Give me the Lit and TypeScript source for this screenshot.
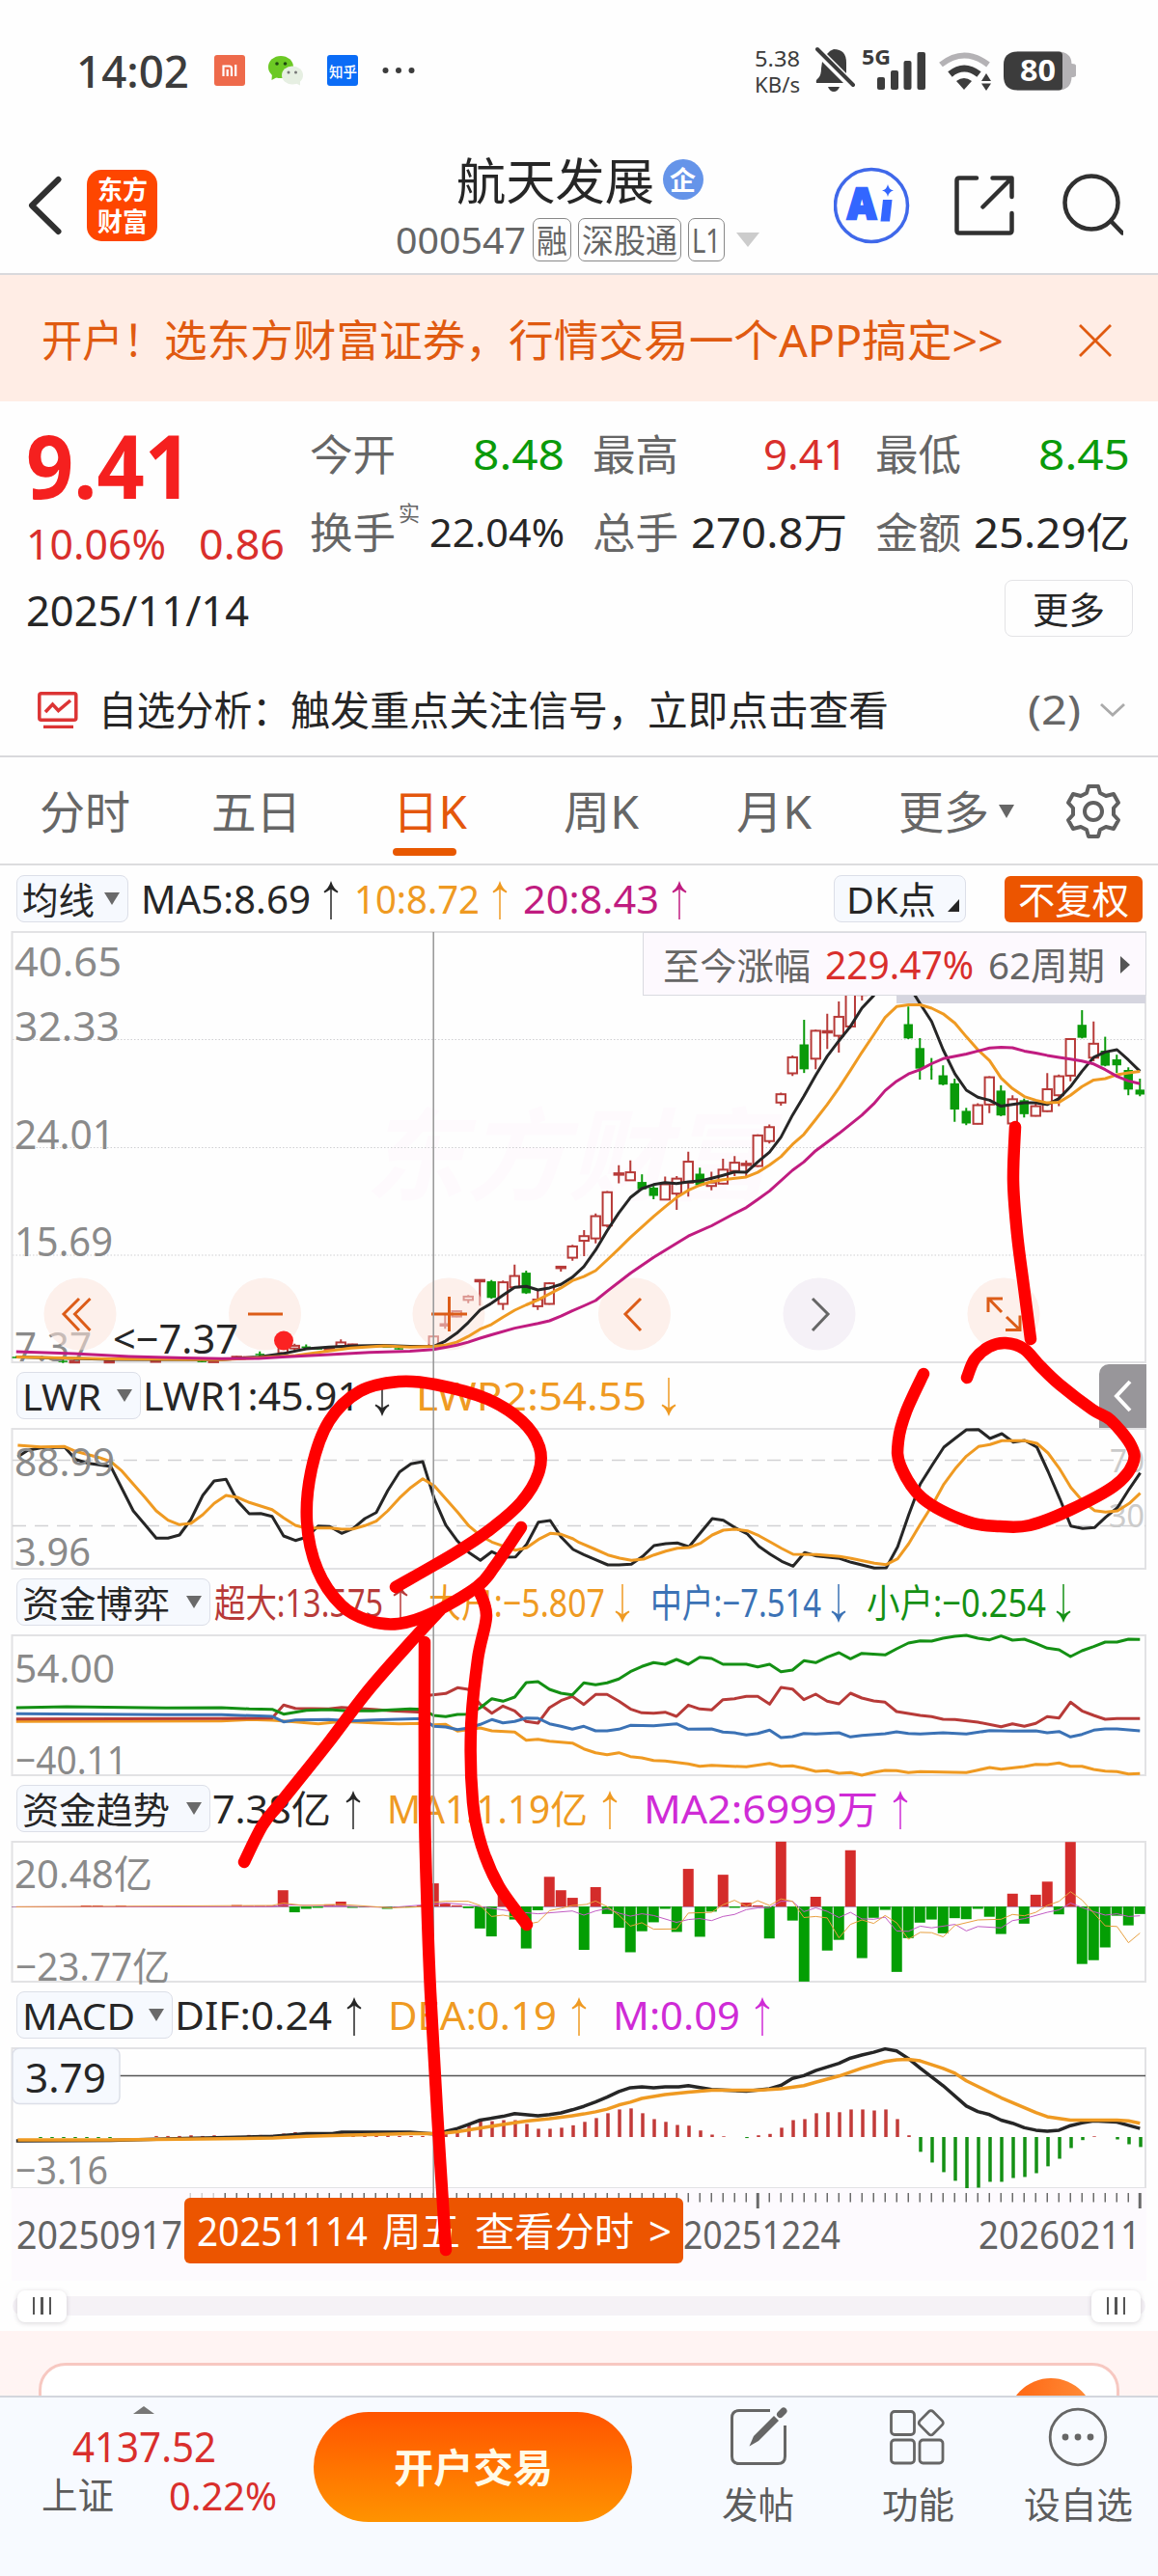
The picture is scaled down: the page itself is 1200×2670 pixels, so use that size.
import { html, svg, css, LitElement } from "lit";
import { customElement, property } from "lit/decorators.js";

const RED = "#b73a38";
const GREEN = "#149014";
const ORANGE = "#ef9a22";
const BLACK = "#262626";
const PURPLE = "#c01c80";
const BLUE = "#3b72b5";
const VIOLET = "#cf2bd6";

// chart grid: one day is STEP units wide, day 0 is the last one
const UNIT = 2.6133;
const STEP = 31.36;
const HALF = 1568;
const dayX = (k: number) => (HALF + 1519 - STEP * k) / UNIT;

// text drawn to an exact width
const fit = (text: string, w: number, size: number, cls = "") => {
  const h = Math.round(size * 1.2);
  return html`<svg class="fit ${cls}" width=${w} height=${h}>
    <text x="0" y=${h / 2 + size * 0.357 + 1} font-size=${size} textLength=${w} lengthAdjust="spacingAndGlyphs">${text}</text>
  </svg>`;
};

const label = (text: string, x: number, y: number, w: number, size = 41, fill = "#8a8a8a") =>
  svg`<text x=${x} y=${y + 0.5} font-size=${size} fill=${fill} textLength=${w} lengthAdjust="spacingAndGlyphs">${text}</text>`;

// left and right halves of a series joined in page coordinates
const series = (left: string, right: string, y0: number, sy: number) => {
  const half = (s: string, dx: number) =>
    s.split(" ").map((p) => {
      const [x, y] = p.split(",").map(Number);
      return `${((x + dx) / UNIT).toFixed(1)},${(y0 + y / sy).toFixed(1)}`;
    });
  return [...half(left, 0), ...half(right, HALF)].join(" ");
};

const line = (points: string, color: string, width = 3.5) =>
  svg`<polyline points=${points} fill="none" stroke=${color} stroke-width=${width} stroke-linejoin="round" />`;

const frame = (y: number, h: number) =>
  svg`<rect x="12.5" y=${y} width="1174.5" height=${h} fill="none" stroke="#e2e2e4" stroke-width="2" />`;

// open smooth curve through points
const smooth = (pts: number[][]) => {
  let d = `M${pts[0][0]} ${pts[0][1]}`;
  for (let i = 0; i < pts.length - 1; i++) {
    const p0 = pts[i - 1] || pts[i];
    const p1 = pts[i];
    const p2 = pts[i + 1];
    const p3 = pts[i + 2] || p2;
    d += ` C${p1[0] + (p2[0] - p0[0]) / 6} ${p1[1] + (p2[1] - p0[1]) / 6} ${p2[0] - (p3[0] - p1[0]) / 6} ${p2[1] - (p3[1] - p1[1]) / 6} ${p2[0]} ${p2[1]}`;
  }
  return d;
};

// [day, up, high, body top, body bottom, low]
const candles: number[][] = [
  [0, 0, 662, 695, 710, 715], [1, 0, 628, 636, 695, 712], [2, 0, 590, 604, 622, 645], [3, 0, 536, 578, 623, 625],
  [4, 1, 490, 557, 599, 610], [5, 0, 456, 500, 539, 541], [6, 1, 540, 543, 653, 670], [7, 1, 650, 655, 712, 745],
  [8, 1, 645, 694, 760, 762], [9, 1, 735, 745, 774, 776], [10, 0, 722, 727, 769, 779], [11, 1, 712, 724, 797, 800],
  [12, 0, 682, 698, 773, 775], [13, 1, 655, 658, 740, 766], [14, 1, 736, 742, 798, 799], [15, 0, 750, 759, 797, 802],
  [16, 0, 662, 676, 755, 792], [17, 0, 622, 652, 680, 682], [18, 0, 600, 632, 632, 665], [19, 0, 540, 570, 632, 665],
  [20, 0, 445, 498, 541, 543], [24, 1, 395, 400, 410, 427], [25, 1, 395, 398, 505, 512], [26, 1, 430, 476, 533, 584],
  [27, 1, 467, 519, 520, 573], [28, 1, 515, 518, 602, 634], [29, 0, 485, 559, 634, 645], [30, 1, 592, 598, 646, 654],
  [31, 1, 704, 709, 734, 743], [32, 1, 800, 808, 850, 857], [33, 1, 830, 833, 925, 928], [34, 1, 908, 918, 922, 955],
  [35, 1, 895, 915, 940, 955], [36, 1, 903, 936, 978, 980], [37, 1, 942, 975, 985, 998], [38, 0, 930, 948, 983, 985],
  [39, 1, 882, 912, 975, 1017], [40, 1, 955, 963, 1008, 1057], [41, 1, 957, 980, 1026, 1028], [42, 0, 985, 990, 1015, 1025],
  [43, 0, 950, 973, 995, 997], [44, 1, 908, 944, 968, 970], [45, 1, 923, 947, 950, 977], [46, 1, 1000, 1004, 1104, 1110],
  [47, 1, 1068, 1076, 1143, 1158], [48, 1, 1118, 1136, 1150, 1196], [49, 1, 1162, 1167, 1201, 1210], [50, 1, 1226, 1228, 1229, 1243],
  [51, 1, 1275, 1278, 1340, 1342], [52, 1, 1300, 1327, 1347, 1358], [53, 0, 1240, 1246, 1308, 1310], [54, 1, 1222, 1256, 1290, 1292],
  [55, 1, 1270, 1275, 1340, 1358], [56, 0, 1268, 1272, 1322, 1324], [57, 1, 1266, 1268, 1269, 1345], [58, 1, 1313, 1318, 1328, 1338],
  [59, 1, 1360, 1362, 1378, 1380], [60, 1, 1370, 1401, 1403, 1415], [61, 1, 1436, 1438, 1468, 1470], [64, 0, 1472, 1473, 1475, 1477],
  [65, 0, 1466, 1468, 1470, 1472], [68, 1, 1460, 1462, 1464, 1468], [69, 1, 1447, 1456, 1468, 1470], [70, 1, 1470, 1474, 1477, 1480],
  [71, 0, 1470, 1473, 1475, 1477], [72, 0, 1462, 1468, 1471, 1478], [73, 1, 1460, 1466, 1474, 1484], [74, 1, 1450, 1473, 1488, 1492],
  [76, 0, 1483, 1490, 1492, 1500], [77, 1, 1498, 1500, 1501, 1503], [78, 1, 1497, 1499, 1500, 1502], [80, 1, 1508, 1511, 1513, 1514],
  [81, 0, 1507, 1511, 1513, 1515], [85, 1, 1508, 1510, 1511, 1515], [89, 1, 1508, 1512, 1513, 1517], [92, 1, 1508, 1512, 1514, 1516],
  [93, 0, 1506, 1511, 1513, 1518], [97, 0, 1497, 1499, 1500, 1503],
];

const mainY = (v: number) => 890 + v / 2.9037;

// signed flow per day, in units off the zero line
const flow: number[] = [
  -22, -55, -27, -119, -156, -167, 187, -23, 72, 34, -50, 37, -80, -30, -7, -37, -34, -78, -38, -47, -92, -190, -10, -33, -150,
  163, -97, -128, 28, -218, -41, 188, -93, 3, 11, -4, 92, -15, -88, 109, -74, -7, -46, -72, -133, -62, -22, 56, -126, 25, 47, 86,
  -11, -122, -38, 35, -87, -64, -5, 3, 8, 67, 3, -3, -2, -7, -2, -3, -4, 14, 6, -4, -7, -17, 47, 2, 2, 2, 4, 0, 0, 0, 0, 0, 0, 0, 0,
  0, 3, 0, 3, 3,
];

const macd: number[] = [
  -29, -21, -7, 0, 2, -9, -32, -63, -85, -105, -116, -119, -130, -130, -147, -149, -127, -102, -74, -43, 5, 52, 80, 77, 80, 80,
  72, 72, 69, 52, 49, 27, 9, 5, -3, 0, 2, 7, 19, 33, 35, 44, 52, 69, 83, 80, 69, 55, 44, 34, 27, 24, 24, 38, 49, 49, 46, 46, 36, 18,
  9, 4, 3, 3, 3, 5, 6, 7, 9, 11, 11, 13, 12, 14, 10, 6, 6, 6, 3, 3, 5, 3, 5, 3, 3, 3, 0, 0, 0, -3, -3, -3, -3, -3, -3, -3,
];

const marks = [
  [[1052, 1168], [1050, 1224], [1054, 1279], [1061, 1334], [1068, 1388]],
  [[1002, 1428], [1010, 1409], [1025, 1396], [1042, 1392], [1061, 1398], [1078, 1416], [1098, 1435], [1132, 1461], [1151, 1472], [1172, 1498], [1174, 1517], [1155, 1540], [1109, 1565], [1067, 1581], [1036, 1582], [1002, 1577], [956, 1553], [933, 1519], [931, 1493], [939, 1463], [957, 1424]],
  [[410, 1645], [471, 1610], [507, 1586], [540, 1557], [558, 1527], [559, 1500], [541, 1473], [505, 1450], [451, 1435], [413, 1432], [373, 1442], [341, 1473], [323, 1522], [318, 1577], [329, 1627], [354, 1664], [383, 1680], [413, 1683], [448, 1672], [494, 1645], [513, 1623], [540, 1583]],
  [[456, 1669], [421, 1707], [380, 1754], [339, 1808], [291, 1868], [272, 1892], [253, 1930]],
  [[440, 1702], [440, 1868], [442, 1957], [446, 2064], [453, 2189], [462, 2332]],
  [[497, 1650], [504, 1675], [495, 1720], [488, 1793], [490, 1868], [499, 1913], [517, 1955], [546, 1995]],
];

const arrow = (dir: string) => html`<svg class="arrow ${dir}" width="16" height="40" viewBox="0 0 16 40">
  <path d="M8 6V40" fill="none" stroke="currentColor" stroke-width="1.5" />
  <path d="M8 0Q10.5 8 15.5 11L14.5 12.5Q11 10.5 8 8.5Q5 10.5 1.5 12.5L.5 11Q5.5 8 8 0Z" fill="currentColor" />
</svg>`;

@customElement("indicator-legend")
export class IndicatorLegend extends LitElement {
  static styles = css`
    :host {
      display: flex;
      align-items: center;
      height: 69px;
      padding-left: 17px;
      box-sizing: border-box;
      font-family: "Noto Sans", "Noto Sans CJK SC", sans-serif;
    }
    svg {
      flex: none;
    }
    .pick {
      display: flex;
      align-items: center;
      justify-content: space-between;
      box-sizing: border-box;
      height: 49px;
      padding: 0 8px 0 5px;
      border: 1.5px solid #dcdfe8;
      border-radius: 8px;
      background: #f6f9fe;
      color: #262626;
    }
    .tri {
      border: 8px solid transparent;
      border-top: 13px solid #6a6a6a;
      border-bottom: 0;
    }
    .near .tri {
      margin-right: 0;
    }
    .items {
      display: flex;
      align-items: center;
      gap: 27px;
      padding-left: 2px;
    }
    .items.near {
      gap: 16px;
      padding-left: 13px;
    }
    .item {
      display: flex;
      align-items: center;
      gap: 15px;
    }
    .near .item {
      gap: 13px;
    }
    .items.tight {
      gap: 21px;
      padding-left: 4px;
    }
    .tight .item {
      gap: 10px;
    }
    .fit {
      overflow: visible;
      fill: currentColor;
    }
    .arrow {
      margin-top: 2px;
    }
    .down {
      transform: rotate(180deg);
    }
  `;

  @property() name = "";
  @property({ type: Number }) nameWidth = 0;
  @property({ type: Number }) box = 0;
  @property() kind = "";
  @property({ type: Array }) items: any[] = [];

  render() {
    return html`
      <div class="pick" style="width:${this.box}px">
        ${fit(this.name, this.nameWidth, 38)}
        <i class="tri"></i>
      </div>
      <div class="items ${this.kind}">
        ${this.items.map(
          ([text, w, color, dir]) => html`<span class="item" style="color:${color}">
            ${fit(text, w, 40)} ${arrow(dir)}
          </span>`
        )}
      </div>
      <slot></slot>
    `;
  }
}

@customElement("app-root")
export class AppRoot extends LitElement {
  static styles = css`
    :host {
      display: block;
      position: relative;
      width: 1200px;
      height: 2670px;
      overflow: hidden;
      background: #fefefe;
      color: #262626;
      font-family: "Noto Sans", "Noto Sans CJK SC", sans-serif;
    }
    svg {
      display: block;
      flex: none;
    }
    .fit {
      overflow: visible;
      fill: currentColor;
    }
    .b {
      font-weight: 700;
    }
    .m {
      font-weight: 500;
    }
    .status {
      display: flex;
      align-items: center;
      height: 146px;
      padding: 0 85px 0 79px;
      color: #3c3c3c;
    }
    .apps {
      display: flex;
      align-items: center;
      gap: 24px;
      margin-left: 26px;
    }
    .mi,
    .zhihu {
      display: flex;
      align-items: center;
      justify-content: center;
      width: 32px;
      height: 32px;
      border-radius: 3px;
      background: #ee6a4b;
      color: #fff;
    }
    .zhihu {
      background: #0b6cf6;
    }
    .right {
      display: flex;
      align-items: center;
      margin-left: auto;
    }
    .speed {
      display: flex;
      flex-direction: column;
      margin-right: 16px;
    }
    .nav {
      display: flex;
      align-items: center;
      box-sizing: border-box;
      height: 139px;
      padding: 0 34px 4px 28px;
      border-bottom: 2px solid #d9d9dc;
    }
    .logo {
      display: flex;
      flex-direction: column;
      align-items: center;
      justify-content: center;
      gap: 1px;
      width: 73px;
      height: 74px;
      margin-left: 25px;
      border-radius: 15px;
      background: #fe4600;
      color: #fff;
    }
    .title {
      display: flex;
      flex-direction: column;
      align-items: center;
      width: 376px;
      margin: 3px 78px 0 247px;
    }
    .name {
      display: flex;
      align-items: center;
      gap: 9px;
      padding: 1px 0 7px 5px;
    }
    .corp {
      display: flex;
      align-items: center;
      justify-content: center;
      width: 42px;
      height: 42px;
      margin-top: -3px;
      border-radius: 50%;
      background: #6594e9;
      color: #fff;
    }
    .code {
      display: flex;
      align-items: center;
      gap: 7px;
      color: #666;
    }
    .tag {
      display: flex;
      align-items: center;
      justify-content: center;
      box-sizing: border-box;
      height: 45px;
      padding: 0 3px;
      border: 1.5px solid #888;
      border-radius: 7px;
    }
    .caret {
      margin-left: 5px;
      border: 12px solid transparent;
      border-top: 15px solid #ccc;
      border-bottom: 0;
    }
    .banner {
      display: flex;
      align-items: center;
      box-sizing: border-box;
      height: 131px;
      padding: 4px 48px 0 43px;
      background: #ffede5;
      color: #e05a10;
    }
    .close {
      margin-left: auto;
    }
    .quote {
      display: flex;
      height: 272px;
    }
    .now {
      display: flex;
      flex-direction: column;
      width: 295px;
      padding: 25px 0 0 27px;
      color: #d92f2c;
    }
    .price {
      display: flex;
      align-items: center;
      height: 84px;
      color: #f5201f;
    }
    .delta {
      display: flex;
      align-items: center;
      gap: 34px;
      height: 78px;
    }
    .date {
      display: flex;
      align-items: center;
      height: 58px;
      color: #262626;
    }
    .stats {
      display: flex;
      flex-direction: column;
      width: 852px;
      padding-top: 14px;
    }
    .grid {
      display: grid;
      grid-template-columns: 264px 264px 264px;
      grid-template-rows: 82px 80px;
      gap: 0 29px;
      margin-left: -1px;
    }
    .stat {
      display: flex;
      align-items: center;
      color: #666;
    }
    .stat > .val {
      margin-left: auto;
    }
    .real {
      margin: 0 0 42px 3px;
    }
    .up {
      color: #d92f2c;
    }
    .fall {
      color: #0a9a0a;
    }
    .ink {
      color: #262626;
    }
    .more {
      display: flex;
      align-items: center;
      justify-content: center;
      align-self: flex-end;
      box-sizing: border-box;
      width: 133px;
      height: 59px;
      margin-top: 9px;
      border: 1.5px solid #e3e3e6;
      border-radius: 8px;
      color: #262626;
    }
    .analysis {
      display: flex;
      align-items: center;
      box-sizing: border-box;
      height: 97px;
      padding: 0 33px 0 39px;
      border-bottom: 2px solid #d9d9dc;
    }
    .analysis .words {
      display: flex;
      margin-left: 21px;
    }
    .count {
      display: flex;
      align-items: center;
      gap: 19px;
      margin-left: auto;
      color: #666;
    }
    .tabs {
      display: flex;
      align-items: center;
      box-sizing: border-box;
      height: 112px;
      padding: 2px 37px 0 41px;
      border-bottom: 2px solid #dcdcde;
      color: #666;
    }
    .tab {
      display: flex;
      flex-direction: column;
      align-items: flex-start;
    }
    .tab.on {
      padding-top: 18px;
      color: #e4570c;
    }
    .bar {
      width: 66px;
      height: 8px;
      margin-top: 10px;
      border-radius: 4px;
      background: #e85800;
    }
    .small {
      margin-left: 10px;
      border: 8px solid transparent;
      border-top: 14px solid #666;
      border-bottom: 0;
    }
    .tools {
      display: flex;
      align-items: center;
      gap: 40px;
      margin: 0 16px 0 auto;
    }
    .dk {
      display: flex;
      align-items: center;
      box-sizing: border-box;
      width: 137px;
      height: 49px;
      padding-left: 12px;
      border: 1.5px solid #dcdfe8;
      border-radius: 8px;
      background: #f6f9fe;
    }
    .corner {
      margin: 14px 0 0 12px;
      border-left: 12px solid transparent;
      border-bottom: 13px solid #262626;
    }
    .adjust {
      display: flex;
      align-items: center;
      justify-content: center;
      width: 143px;
      height: 48px;
      border-radius: 6px;
      background: #ec5500;
      color: #fff;
    }
    .chart {
      position: relative;
    }
    .pane {
      overflow: visible;
    }
    .since {
      position: absolute;
      top: 0;
      right: 12px;
      display: flex;
      align-items: center;
      gap: 15px;
      box-sizing: border-box;
      width: 522px;
      height: 66px;
      padding: 2px 0 0 20px;
      border: 1.5px solid #d9dae0;
      background: #fdf9fe;
      color: #666;
    }
    .play {
      border: 9px solid transparent;
      border-left: 10px solid #555;
      border-right: 0;
      margin-left: 1px;
    }
    .row {
      position: relative;
    }
    .side {
      position: absolute;
      top: 2px;
      right: 12px;
      display: flex;
      align-items: center;
      justify-content: center;
      width: 49px;
      height: 66px;
      border-radius: 10px 0 0 0;
      background: #98969a;
    }
    .axis {
      position: relative;
      height: 96px;
      margin: 0 12px;
      background: #fdfafe;
    }
    .axis > svg {
      margin-left: -12px;
    }
    .pill {
      position: absolute;
      top: 10px;
      left: 179px;
      display: flex;
      align-items: center;
      gap: 15px;
      box-sizing: border-box;
      width: 517px;
      height: 68px;
      padding-left: 13px;
      border-radius: 6px;
      background: #ec5500;
      color: #fff;
    }
    .slider {
      display: flex;
      align-items: center;
      height: 52px;
      padding: 0 13px;
    }
    .track {
      display: flex;
      align-items: center;
      justify-content: space-between;
      width: 1164px;
      height: 20px;
      padding: 0 5px;
      border-radius: 10px;
      background: #f5f2f6;
    }
    .knob {
      display: flex;
      align-items: center;
      justify-content: center;
      gap: 6px;
      width: 51px;
      height: 33px;
      border-radius: 8px;
      background: #fff;
      box-shadow: 0 1px 5px rgba(60, 50, 70, 0.2);
    }
    .knob i {
      width: 2.5px;
      height: 18px;
      background: #555;
    }
    .promo {
      height: 67px;
      box-sizing: border-box;
      padding: 33px 40px 0;
      overflow: hidden;
      background: #fff4f3;
    }
    .card {
      display: flex;
      justify-content: flex-end;
      box-sizing: border-box;
      height: 90px;
      padding: 13px 23px 0 0;
      border: 3px solid #f7c8c1;
      border-radius: 28px;
      background: #fff;
    }
    .ball {
      width: 90px;
      height: 90px;
      flex: none;
      border-radius: 50%;
      background: linear-gradient(100deg, #ff6410, #ff9440);
    }
    .foot {
      display: flex;
      box-sizing: border-box;
      height: 187px;
      border-top: 2px solid #d3d6dd;
      background: #f7faff;
      color: #5c5c5c;
    }
    .index {
      display: flex;
      flex-direction: column;
      align-items: center;
      width: 325px;
      padding-top: 9px;
    }
    .index .peak {
      margin-right: 27px;
      border: 11px solid transparent;
      border-bottom: 8px solid #777;
      border-top: 0;
    }
    .points {
      margin: 8px 27px 0 0;
    }
    .sh {
      display: flex;
      gap: 57px;
      margin: 1px 0 0 5px;
    }
    .trade {
      display: flex;
      align-items: center;
      justify-content: center;
      width: 330px;
      height: 114px;
      margin-top: 15px;
      padding-top: 1px;
      box-sizing: border-box;
      border-radius: 57px;
      background: linear-gradient(#ff5400, #ff9300);
      color: #fffbe8;
    }
    .acts {
      display: flex;
      margin: 8px 0 0 47px;
    }
    .act {
      display: flex;
      flex-direction: column;
      align-items: center;
      gap: 14px;
      width: 166px;
    }
    .ink-layer {
      position: absolute;
      left: 0;
      top: 0;
      pointer-events: none;
    }
    text {
      font-family: "Noto Sans", "Noto Sans CJK SC", sans-serif;
    }
  `;

  statusBar() {
    return html`<div class="status">
      ${fit("14:02", 117, 46, "m")}
      <div class="apps">
        <span class="mi">
          <svg width="16" height="12" viewBox="0 0 16 12">
            <path d="M1.5 12V1.5H7.5Q10 1.5 10 4V12M5.7 5V12M14.2 0V12" fill="none" stroke="#fff" stroke-width="2.2" />
          </svg>
        </span>
        <svg width="37" height="32" viewBox="0 0 37 32">
          <ellipse cx="13" cy="12.5" rx="13" ry="11.5" fill="#6cc924" />
          <path d="M4 19L3.5 26L11 22Z" fill="#6cc924" />
          <circle cx="9" cy="9" r="1.8" fill="#1f4a10" />
          <circle cx="17.5" cy="9" r="1.8" fill="#1f4a10" />
          <ellipse cx="25" cy="21" rx="11" ry="9.5" fill="#e6efe2" />
          <path d="M28 29L33 31.5L33 26Z" fill="#e6efe2" />
          <circle cx="21" cy="18" r="1.5" fill="#777" />
          <circle cx="28.5" cy="18" r="1.5" fill="#777" />
        </svg>
        <span class="zhihu">${fit("知乎", 29, 14.5, "m")}</span>
        <svg width="36" height="8" viewBox="0 0 36 8" fill="#3c3c3c">
          <circle cx="4.5" cy="4" r="3" />
          <circle cx="18" cy="4" r="3" />
          <circle cx="31.5" cy="4" r="3" />
        </svg>
      </div>
      <div class="right">
        <div class="speed">${fit("5.38", 47, 22.5)} ${fit("KB/s", 47, 22.5)}</div>
        <svg width="270" height="72" viewBox="845 36 270 72" fill="#3c3c3c">
          <path d="M864 50Q877 50 877 64V75L857 55Q860 51 864 50Z" />
          <path d="M852 63L874 85H846Q845 82 848 80Q851 77 851 70Z" />
          <path d="M858 89H870Q868 94 864 94Q860 94 858 89Z" />
          <path d="M847 50L884 87" stroke="#3c3c3c" stroke-width="4" stroke-linecap="round" />
          <text x="893" y="65.5" font-size="22" font-weight="700" textLength="30" lengthAdjust="spacingAndGlyphs">5G</text>
          <rect x="909" y="79" width="8" height="13" rx="2" />
          <rect x="923" y="72" width="8" height="20" rx="2" />
          <rect x="936.5" y="62" width="8" height="30" rx="2" />
          <rect x="950.5" y="53" width="8.5" height="39" rx="2" />
          <path d="M975 66Q999 47 1024 66" fill="none" stroke="#b4b2b5" stroke-width="6" />
          <path d="M984.5 76Q999 64 1014.5 76" fill="none" stroke="#3c3c3c" stroke-width="7" />
          <path d="M991 83Q999 77 1007 83L999 92Z" />
          <path d="M1017 83L1022 75L1027 83Z M1017 85.5H1027L1022 93Z" />
          <path d="M1054 52.5H1097Q1110 53 1110.5 65Q1115 65 1115 67V77Q1115 79 1110.5 79Q1110 92 1097 92.5H1054Z" fill="#b4b2b5" />
          <path d="M1054 52.5H1097Q1101 52.5 1101 56V89Q1101 92.5 1097 92.5H1054Q1040 92 1040 78V66Q1040 53 1054 52.5Z" />
          <text x="1057" y="83" font-size="30" font-weight="700" fill="#fff" textLength="37" lengthAdjust="spacingAndGlyphs">80</text>
        </svg>
      </div>
    </div>`;
  }

  nav() {
    return html`<div class="nav">
      <svg width="37" height="62" viewBox="0 0 37 62">
        <path d="M32.5 4L5 31L32.5 58" fill="none" stroke="#303030" stroke-width="6" stroke-linecap="round" stroke-linejoin="round" />
      </svg>
      <div class="logo">${fit("东方", 52, 27, "b")}${fit("财富", 52, 27, "b")}</div>
      <div class="title">
        <div class="name">
          ${fit("航天发展", 205, 51)}
          <span class="corp">${fit("企", 27, 27, "b")}</span>
        </div>
        <div class="code">
          ${fit("000547", 135, 39)}
          <span class="tag">${fit("融", 32, 33)}</span>
          <span class="tag">${fit("深股通", 99, 34)}</span>
          <span class="tag">${fit("L1", 30, 34)}</span>
          <i class="caret"></i>
        </div>
      </div>
      <svg width="300" height="80" viewBox="866 173 300 80" fill="none">
        <circle cx="905" cy="213" r="37.5" stroke="#3f68ea" stroke-width="3.5" />
        <text x="880" y="227" font-size="44" font-weight="900" fill="#3366ff" stroke="#3366ff" stroke-width="2.5" textLength="30" lengthAdjust="spacingAndGlyphs">A</text>
        <path d="M917 207H926.5L924 229.5H914.5Z" fill="#3366ff" />
        <path d="M922 191Q923 196.5 928 197.5Q923 198.5 922 204Q921 198.5 916 197.5Q921 196.5 922 191Z" fill="#3366ff" />
        <g stroke="#303030" stroke-width="4.5" stroke-linecap="round" stroke-linejoin="round">
          <path d="M1014 184.5H996Q993.5 184.5 993.5 187V239Q993.5 241.5 996 241.5H1048Q1050.5 241.5 1050.5 239V221M1030.5 184.5H1050.5V204M1049 186L1020.5 214.5" />
          <circle cx="1133" cy="210" r="27.5" />
          <path d="M1154 230L1165 241.5" />
        </g>
      </svg>
    </div>`;
  }

  stat(name: string, value: string, w: number, cls: string, size = 43) {
    return html`<div class="stat">
      ${fit(name, 89, 44.5)} ${name === "换手" ? html`<span class="real">${fit("实", 22, 22)}</span>` : ""}
      <span class="val ${cls}">${fit(value, w, size)}</span>
    </div>`;
  }

  quote() {
    return html`<div class="quote">
        <div class="now">
          <div class="price">${fit("9.41", 172, 92, "b")}</div>
          <div class="delta">${fit("10.06%", 145, 43)} ${fit("0.86", 89, 43)}</div>
          <div class="date">${fit("2025/11/14", 231, 44)}</div>
        </div>
        <div class="stats">
          <div class="grid">
            ${this.stat("今开", "8.48", 95, "fall")} ${this.stat("最高", "9.41", 87, "up")}
            ${this.stat("最低", "8.45", 95, "fall")} ${this.stat("换手", "22.04%", 140, "ink", 40)}
            ${this.stat("总手", "270.8万", 162, "ink")} ${this.stat("金额", "25.29亿", 162, "ink")}
          </div>
          <div class="more">${fit("更多", 75, 38)}</div>
        </div>
      </div>
      <div class="analysis">
        <svg width="42" height="38" viewBox="0 0 42 38" fill="none" stroke="#dc3434" stroke-width="3.5">
          <rect x="1.8" y="1.8" width="38" height="27.5" rx="2" />
          <path d="M8 21L15.5 13L21.5 19.5L34 9M6 36.5H37" />
        </svg>
        <div class="words">
          ${fit("自选分析：", 199, 41.5)} ${fit("触发重点关注信号，", 370, 41.5)} ${fit("立即点击查看", 250, 41.5)}
        </div>
        <div class="count">
          ${fit("(2)", 55, 41)}
          <svg width="28" height="15" viewBox="0 0 28 15">
            <path d="M2 2L14 13L26 2" fill="none" stroke="#aaa" stroke-width="2.8" />
          </svg>
        </div>
      </div>`;
  }

  tabs() {
    return html`<div class="tabs">
      <span class="tab">${fit("分时", 94, 47)}</span>
      <span class="tab" style="margin-left:84px">${fit("五日", 93, 46.5)}</span>
      <span class="tab on" style="margin-left:95px">${fit("日K", 77, 46.5)}<i class="bar"></i></span>
      <span class="tab" style="margin-left:100px">${fit("周K", 78, 46.5)}</span>
      <span class="tab" style="margin-left:101px">${fit("月K", 78, 46.5)}</span>
      <span class="tab" style="margin-left:90px">${fit("更多", 94, 46.5)}</span>
      <i class="small"></i>
      <svg width="60" height="60" viewBox="-30 -30 60 60" style="margin-left:auto" fill="none" stroke="#606060" stroke-width="4" stroke-linejoin="round">
        <path d="M-5 -26H5L7 -19L13 -16L21 -18L26 -9L21 -3.5V3.5L26 9L21 18L13 16L7 19L5 26H-5L-7 19L-13 16L-21 18L-26 9L-21 3.5V-3.5L-26 -9L-21 -18L-13 -16L-7 -19Z" />
        <circle r="9" />
      </svg>
    </div>`;
  }

  mainChart() {
    const ma = (l: string, r: string) => series(l, r, 890, 2.9037);
    return html`<div class="chart">
      <svg class="pane" width="1200" height="446" viewBox="0 966 1200 446">
        <text x="378" y="1236" font-size="104" font-weight="700" font-style="italic" fill="#fefafd" textLength="420">东方财富</text>
        ${[1077.5, 1189.5, 1301].map(
          (y) => svg`<path d="M13 ${y}H1187" stroke="#cfcfd2" stroke-width="1.2" stroke-dasharray="1.5 2" />`
        )}
        ${frame(966, 446)}
        <rect x="929" y="1031" width="258" height="9" fill="#d5d5df" />
        ${candles.map(([k, up, hi, t, b, lo]) => {
          const x = dayX(k);
          const y = mainY(t);
          const h = Math.max(mainY(b) - y, 1.5);
          return up
            ? svg`<path d="M${x} ${mainY(hi)}V${y}M${x} ${y + h}V${mainY(lo)}" stroke=${RED} stroke-width="2" />
              <rect x=${x - 4.7} y=${y} width="9.4" height=${h} fill="#fefefe" stroke=${RED} stroke-width="2" />`
            : svg`<path d="M${x} ${mainY(hi)}V${mainY(lo)}" stroke="#0a9a0a" stroke-width="2" />
              <rect x=${x - (k === 18 ? 1 : 4.7)} y=${y} width=${k === 18 ? 2 : 9.4} height=${h} fill="#0a9a0a" />`;
        })}
        ${label("40.65", 15, 1011, 111, 42)} ${label("32.33", 15, 1078, 109, 42)} ${label("24.01", 15, 1190, 104, 42)}
        ${label("15.69", 15, 1301, 102, 42)} ${label("7.37", 15, 1410, 80, 42)}
        ${[
          [83, "#fbe3da"], [274.5, "#fbe3da"], [465, "#fbe3da"], [657.5, "#fbe3da"], [849, "#ece6f0"], [1040, "#fbe3da"],
        ].map(([x, c]) => svg`<circle cx=${x} cy="1362" r="37.5" fill=${c} opacity=".55" />`)}
        <g fill="none" stroke="#dc5c18" stroke-width="3">
          <path d="M82 1346L66 1362L82 1379M93.5 1346L77.5 1362L93.5 1379M257 1362H293M447 1362H484M465.5 1344V1380" />
          <path d="M664 1346L648 1362L664 1379" />
          <path d="M1024 1360V1346H1039M1024.5 1346L1038 1360M1057 1363.5V1378.5H1042M1057 1378.5L1043 1365" />
        </g>
        <path d="M842 1346L858 1362L842 1379" fill="none" stroke="#666" stroke-width="3" />
        ${line(ma(
          "44,1500 300,1507 600,1508 700,1500 765,1490 830,1475 890,1470 960,1466 1040,1465 1110,1468 1174,1468 1206,1452 1237,1428 1268,1396 1300,1358 1331,1338 1362,1314 1394,1290 1425,1287 1457,1298 1488,1292 1519,1281 1550,1260",
          "13,1228 45,1178 76,1120 108,1066 139,1020 170,993 202,981 233,975 264,978 296,973 327,970 359,962 390,953 421,943 453,944 484,913 516,883 547,838 578,772 609,715 641,652 672,595 704,548 735,505 766,450 798,412 829,370 860,360 892,380 924,437 955,490 986,575 1018,648 1049,697 1080,718 1112,727 1143,745 1174,740 1206,735 1237,735 1268,740 1300,722 1331,686 1362,640 1394,598 1425,582 1457,575 1488,606 1519,640"
        ), BLACK, 3)}
        ${line(ma(
          "44,1500 300,1506 600,1508 700,1502 800,1495 900,1480 950,1473 1040,1466 1110,1470 1174,1468 1206,1464 1237,1455 1268,1438 1300,1416 1331,1402 1362,1380 1394,1359 1425,1343 1457,1328 1488,1310 1519,1292 1550,1270",
          "13,1258 45,1240 76,1208 108,1174 139,1140 202,1077 233,1048 264,1020 296,998 327,983 359,972 390,966 453,958 484,944 516,922 547,897 578,860 609,830 641,785 672,740 704,690 735,637 766,583 798,530 829,478 860,445 892,440 924,440 955,450 986,467 1018,495 1049,536 1080,575 1112,608 1143,660 1174,692 1206,716 1237,727 1268,735 1300,733 1331,712 1362,686 1394,666 1425,662 1457,650 1488,645 1519,640"
        ), ORANGE, 3)}
        ${line(ma(
          "44,1484 200,1490 350,1498 500,1503 600,1505 700,1504 765,1500 880,1493 1000,1486 1110,1482 1174,1477 1206,1471 1237,1464 1268,1455 1300,1443 1331,1433 1394,1413 1457,1399 1488,1391 1519,1377 1550,1361",
          "13,1346 45,1330 76,1302 139,1248 202,1200 264,1158 296,1136 359,1105 421,1068 453,1050 484,1026 516,1000 578,938 609,913 641,879 704,827 766,772 798,738 829,698 860,670 892,648 924,635 955,617 986,602 1049,588 1080,579 1112,570 1143,568 1174,569 1206,579 1237,585 1268,592 1300,598 1331,603 1362,609 1394,618 1425,635 1457,655 1488,669 1519,677"
        ), PURPLE, 3)}
        <circle cx="294" cy="1389.5" r="10" fill="#fb2222" />
        ${label("<−7.37", 117, 1402, 130, 42, BLACK)}
      </svg>
      <div class="since">
        ${fit("至今涨幅", 153, 38)}
        <span class="up">${fit("229.47%", 154, 40)}</span>
        ${fit("62周期", 121, 39)}
        <i class="play"></i>
      </div>
    </div>`;
  }

  lwrChart() {
    return html`<svg class="pane" width="1200" height="145" viewBox="0 1481 1200 145">
      ${frame(1481, 145)}
      <path d="M13 1513.5H1187M13 1581.5H1187" stroke="#d2d2d4" stroke-width="1.5" stroke-dasharray="14 9" />
      ${label("70", 1150, 1525, 36, 33, "#cbcbcb")} ${label("30", 1149, 1582, 37, 33, "#cbcbcb")}
      ${line(series(
        "48,300 75,280 110,272 175,270 205,308 240,320 268,325 300,330 330,398 361,468 392,510 423,553 455,553 486,543 517,495 549,420 580,375 612,370 643,437 675,477 706,476 737,485 768,546 800,560 830,550 862,515 893,517 925,538 956,523 988,492 1019,473 1050,405 1082,347 1113,322 1145,315 1176,430 1207,512 1239,562 1270,598 1301,622 1332,595 1364,612 1396,611 1426,572 1458,503 1490,498 1520,550 1552,588",
        "13,604 45,620 78,636 108,636 142,634 172,610 203,576 235,570 266,568 298,580 330,535 361,492 391,497 422,520 456,540 487,578 518,603 549,625 580,640 611,598 643,608 706,616 737,628 800,646 832,645 863,580 893,480 924,385 957,325 988,270 1019,242 1049,216 1082,215 1113,243 1145,228 1176,254 1207,249 1240,270 1270,345 1302,430 1332,515 1364,523 1396,520 1426,488 1458,458 1490,400 1520,350",
        1410, 3
      ), BLACK, 3)}
      ${line(series(
        "48,264 110,269 175,268 205,283 268,302 300,315 330,344 361,385 392,425 423,468 455,497 486,511 517,507 549,480 580,445 612,420 643,426 675,442 737,464 768,490 800,513 830,522 862,521 893,521 925,525 956,524 988,514 1019,500 1050,468 1082,428 1113,395 1145,368 1176,390 1239,472 1270,515 1301,545 1332,565 1364,578 1396,590 1426,583 1458,557 1490,538 1520,541 1552,555",
        "0,566 45,588 78,605 110,615 142,622 175,618 203,605 235,593 266,584 298,582 330,568 361,543 391,528 422,525 456,530 487,545 518,565 549,585 580,603 643,604 706,610 737,616 800,631 832,635 863,617 893,570 924,510 957,450 988,385 1019,337 1049,298 1082,268 1113,262 1145,250 1207,250 1240,258 1270,288 1302,338 1332,395 1364,438 1396,467 1426,472 1458,468 1490,445 1520,413",
        1410, 3
      ), ORANGE, 3)}
      ${label("88.99", 15, 1529, 104, 40)} ${label("3.96", 15, 1622, 79, 40)}
    </svg>`;
  }

  fundChart() {
    return html`<svg class="pane" width="1200" height="145" viewBox="0 1695 1200 145">
      ${frame(1695, 145)} ${label("54.00", 15, 1743, 104, 40)} ${label("−40.11", 16, 1838, 116, 40)}
      ${line(series(
        "44,1123 600,1121 675,1117 737,1119 800,1124 862,1130 925,1123 1010,1127 1080,1130 1145,1129 1174,1133 1207,1132 1239,1153 1301,1143 1332,1152 1394,1156 1425,1181 1457,1178 1488,1184 1550,1190",
        "13,1208 45,1220 76,1226 108,1220 139,1232 170,1236 202,1244 233,1246 296,1255 327,1262 359,1259 453,1264 516,1253 547,1262 578,1261 609,1268 641,1278 672,1276 704,1284 735,1282 766,1290 798,1281 829,1275 860,1276 892,1282 924,1279 1049,1282 1080,1274 1112,1266 1143,1271 1206,1263 1237,1256 1268,1257 1300,1252 1331,1262 1362,1262 1394,1272 1425,1277 1457,1279 1488,1286 1519,1285",
        1410, 3
      ), ORANGE, 3)}
      ${line(series(
        "44,1115 600,1114 737,1112 768,1072 800,1082 890,1084 925,1079 1010,1085 1060,1090 1145,1094 1160,1042 1207,1036 1239,1018 1268,1023 1301,1070 1332,1097 1362,1075 1394,1090 1425,1123 1457,1128 1488,1080 1519,1058 1550,1045",
        "13,1070 45,1039 76,1039 108,1060 139,1084 170,1096 202,1097 233,1094 264,1107 296,1072 327,1084 359,1087 390,1055 421,1052 453,1045 484,1045 516,1069 547,1017 578,1022 609,1055 641,1038 672,1060 704,1068 735,1035 766,1050 798,1059 829,1063 860,1092 924,1104 955,1108 986,1116 1018,1117 1080,1125 1143,1139 1174,1130 1206,1138 1237,1129 1268,1108 1300,1112 1331,1063 1362,1090 1394,1104 1425,1116 1457,1114 1519,1114",
        1410, 3
      ), RED, 3)}
      ${line(series(
        "44,1099 450,1102 600,1102 737,1107 768,1124 800,1118 890,1117 950,1121 1010,1118 1145,1114 1174,1138 1207,1140 1239,1148 1270,1143 1301,1132 1332,1117 1362,1127 1394,1123 1425,1112 1457,1113 1488,1130 1519,1138 1550,1147",
        "13,1138 45,1152 76,1152 108,1147 139,1135 202,1136 264,1130 296,1147 359,1146 390,1156 421,1158 453,1165 484,1160 516,1150 547,1173 578,1170 609,1160 641,1162 704,1158 735,1171 766,1166 829,1161 860,1155 892,1160 924,1162 986,1158 1049,1162 1112,1151 1174,1153 1237,1152 1268,1158 1300,1154 1331,1171 1362,1163 1394,1150 1425,1146 1457,1146 1519,1152",
        1410, 3
      ), BLUE, 3)}
      ${line(series(
        "44,1080 180,1077 450,1081 600,1080 675,1084 737,1085 768,1100 830,1088 890,1086 940,1090 1010,1090 1110,1084 1145,1085 1174,1104 1207,1108 1239,1101 1270,1100 1301,1080 1332,1052 1362,1060 1394,1047 1425,1002 1457,999 1488,1023 1519,1035 1550,1040",
        "13,1003 45,1009 76,1003 108,991 139,968 170,952 202,940 233,945 264,930 296,945 327,923 359,927 390,945 453,945 484,953 516,945 547,968 578,963 609,934 641,940 672,923 704,909 735,928 766,911 829,916 860,897 892,879 924,872 955,873 986,864 1018,858 1049,855 1080,864 1112,869 1143,857 1174,870 1206,867 1237,880 1268,895 1300,900 1331,921 1362,903 1394,890 1425,876 1457,876 1488,867 1519,868",
        1410, 3
      ), GREEN, 3)}
    </svg>`;
  }

  flowChart() {
    const zero = 1976;
    return html`<svg class="pane" width="1200" height="145" viewBox="0 1909 1200 145">
      ${frame(1909, 145)} ${label("20.48亿", 15, 1956, 143, 40)} ${label("−23.77亿", 16, 2052, 160, 40)}
      <path d="M12 ${zero + 0.5}H1187" stroke="#b48ab0" stroke-width="1" />
      ${flow.map((v, k) => {
        const h = Math.abs(v) / 2.8;
        return svg`<rect x=${dayX(k) - 5.5} y=${v > 0 ? zero - h : zero} width="11" height=${h} fill=${v > 0 ? "#d42c2b" : "#049e04"} />`;
      })}
      ${line(series(
        "44,354 737,353 768,348 900,351 1060,356 1207,343 1268,348 1332,358 1394,368 1457,374 1550,366",
        "13,378 45,366 76,359 108,372 139,381 170,374 202,379 264,399 296,391 327,388 359,394 390,382 421,376 453,362 484,357 516,356 547,338 578,338 609,368 641,357 672,367 704,385 735,370 766,389 798,390 829,384 860,424 892,425 924,410 955,415 1018,405 1049,424 1080,411 1143,415 1174,394 1206,388 1268,370 1300,363 1331,343 1362,356 1394,368 1425,378 1457,374 1488,382 1519,380",
        1850, 2.8
      ), "#c25cc4", 1)}
      ${line(series(
        "44,354 737,350 768,343 820,350 925,347 1060,357 1150,353 1174,341 1207,338 1268,338 1300,350 1331,382 1362,378 1394,384 1425,405 1457,398 1488,365 1519,358 1550,350",
        "0,349 20,347 45,337 76,353 108,378 139,410 170,400 202,419 264,418 296,372 359,370 390,348 421,335 453,352 484,336 516,350 547,331 578,338 609,385 641,382 672,386 704,444 735,405 766,392 798,402 829,379 860,400 892,448 924,428 955,429 986,441 1018,408 1080,392 1143,390 1174,376 1206,380 1237,370 1268,350 1300,338 1331,310 1362,334 1394,372 1425,409 1457,411 1488,458 1519,430",
        1850, 2.8
      ), "#e8a040", 1)}
    </svg>`;
  }

  macdChart() {
    const zero = 2215;
    return html`<svg class="pane" width="1200" height="145" viewBox="0 2123 1200 145">
      ${frame(2123, 145)}
      <path d="M124 2151.5H1187" stroke="#555" stroke-width="1.3" />
      ${macd.map((v, k) => {
        const h = Math.abs(v) / 2.8;
        return svg`<rect x=${dayX(k) - 1} y=${v > 0 ? zero - h : zero} width="3.5" height=${h} fill=${v > 0 ? "#c23a38" : "#149014"} />`;
      })}
      ${line(series(
        "44,1033 300,1032 500,1026 740,1020 830,1012 900,1012 925,1008 1110,1008 1174,1013 1207,1006 1239,997 1268,986 1300,973 1362,962 1394,954 1457,960 1488,957 1519,952 1550,943",
        "13,933 45,920 76,906 108,890 139,879 170,876 202,879 233,876 270,876 296,873 359,884 453,889 516,882 547,872 578,852 609,844 641,829 704,808 735,793 766,784 798,776 829,766 860,772 892,794 924,822 986,873 1049,932 1080,948 1112,957 1143,973 1174,982 1206,995 1237,1002 1268,1005 1300,1002 1331,989 1362,981 1394,975 1457,979 1488,988 1519,997",
        1850, 2.8
      ), BLACK)}
      ${line(series(
        "48,1030 300,1030 740,1025 830,1020 900,1018 1110,1012 1174,1012 1207,1010 1239,1007 1300,996 1362,986 1425,976 1488,969 1550,960",
        "13,955 45,949 76,941 108,929 139,921 170,910 233,899 296,892 359,886 421,886 484,886 547,882 609,873 641,863 704,845 766,822 829,803 860,798 892,797 924,801 986,823 1018,837 1049,859 1143,908 1237,951 1268,963 1331,973 1457,973 1488,975 1519,982",
        1850, 2.8
      ), ORANGE)}
      ${label("−3.16", 16, 2263, 96, 40)}
      <rect x="13" y="2123" width="111" height="57.5" rx="7" fill="#f6f9fe" stroke="#dcdfe8" stroke-width="1.5" />
      ${label("3.79", 26, 2168, 84, 41, BLACK)}
    </svg>`;
  }

  axis() {
    const ticks = Array.from({ length: 83 }, (_, k) => k);
    return html`<div class="axis">
      <svg class="pane" width="1200" height="96" viewBox="0 2268 1200 96">
        ${ticks.map((k) => {
          const long = k === 0 || k === 33;
          return svg`<path d="M${dayX(k)} 2273V${long ? 2289 : 2282.5}" stroke="#6a6a6a" stroke-width=${long ? 3 : 1.5} opacity=${k > 79 ? 0.3 : 1} />`;
        })}
        ${label("20250917", 17, 2330, 172, 39.5, "#636363")} ${label("20251224", 708, 2330, 163, 39.5, "#636363")}
        ${label("20260211", 1014, 2330, 168, 39.5, "#636363")}
      </svg>
      <div class="pill">
        ${fit("20251114", 177, 41)} ${fit("周五", 81, 40.5)} ${fit("查看分时", 165, 41)} ${fit(">", 24, 42)}
      </div>
    </div>`;
  }

  foot() {
    return html`<div class="foot">
      <div class="index">
        <i class="peak"></i>
        <span class="up points">${fit("4137.52", 149, 43)}</span>
        <div class="sh">${fit("上证", 75, 37.5)}<span class="up">${fit("0.22%", 112, 40)}</span></div>
      </div>
      <div class="trade">${fit("开户交易", 165, 41, "b")}</div>
      <div class="acts">
        <div class="act">
          <svg width="64" height="66" viewBox="752 2493 64 66" fill="none" stroke="#666" stroke-width="3">
            <path d="M797 2498.500H765Q757.500 2498.500 757.500 2506V2546Q757.500 2553.500 765 2553.500H805Q812.500 2553.500 812.500 2546V2514" />
            <path d="M775.500 2535.500L780 2525L801 2504L806 2509L785 2530Z" fill="#666" stroke="none" />
            <path d="M807.500 2502.500L811 2499" stroke-width="7" stroke-linecap="round" />
          </svg>
          ${fit("发帖", 75, 37.5)}
        </div>
        <div class="act">
          <svg width="64" height="66" viewBox="920 2493 64 66" fill="none" stroke="#666" stroke-width="2.8">
            <rect x="924.5" y="2499.5" width="24" height="24" rx="3.5" />
            <rect x="924.5" y="2529" width="24" height="24" rx="3.5" />
            <rect x="954" y="2529" width="24" height="24" rx="3.5" />
            <rect x="956" y="2501.5" width="19.5" height="19.5" rx="3" transform="rotate(45 965.75 2511.25)" />
          </svg>
          ${fit("功能", 75, 37.5)}
        </div>
        <div class="act">
          <svg width="64" height="66" viewBox="1085 2493 64 66">
            <circle cx="1117" cy="2526" r="28.8" fill="none" stroke="#666" stroke-width="2.8" />
            <g fill="#666">
              <circle cx="1104" cy="2526" r="3.4" />
              <circle cx="1117" cy="2526" r="3.4" />
              <circle cx="1130" cy="2526" r="3.4" />
            </g>
          </svg>
          ${fit("设自选", 113, 37.5)}
        </div>
      </div>
    </div>`;
  }

  render() {
    return html`
      ${this.statusBar()} ${this.nav()}
      <div class="banner">
        ${fit("开户！", 127, 45.5)} ${fit("选东方财富证券，", 357, 45.5)} ${fit("行情交易一个APP搞定>>", 513, 45.5)}
        <svg class="close" width="34" height="34" viewBox="0 0 34 34">
          <path d="M1 1L33 33M33 1L1 33" stroke="#e05a10" stroke-width="2.8" />
        </svg>
      </div>
      ${this.quote()} ${this.tabs()}
      <indicator-legend
        name="均线"
        .nameWidth=${75}
        .box=${116}
        kind="near"
        .items=${[
          ["MA5:8.69", 176, BLACK, "up"],
          ["10:8.72", 130, ORANGE, "up"],
          ["20:8.43", 141, PURPLE, "up"],
        ]}
      >
        <div class="tools">
          <span class="dk">${fit("DK点", 93, 38.5)}<i class="corner"></i></span>
          <span class="adjust">${fit("不复权", 115, 38.5)}</span>
        </div>
      </indicator-legend>
      ${this.mainChart()}
      <div class="row">
        <indicator-legend
          name="LWR"
          .nameWidth=${82}
          .box=${129}
          .items=${[
            ["LWR1:45.91", 225, BLACK, "down"],
            ["LWR2:54.55", 239, ORANGE, "down"],
          ]}
        ></indicator-legend>
        <span class="side">
          <svg width="20" height="36" viewBox="0 0 20 36">
            <path d="M17 3L3 18L17 33" fill="none" stroke="#fff" stroke-width="4" />
          </svg>
        </span>
      </div>
      ${this.lwrChart()}
      <indicator-legend
        name="资金博弈"
        .nameWidth=${153}
        .box=${201}
        kind="tight"
        .items=${[
          ["超大:13.575", 175, RED, "up"],
          ["大户:−5.807", 183, ORANGE, "down"],
          ["中户:−7.514", 177, BLUE, "down"],
          ["小户:−0.254", 186, GREEN, "down"],
        ]}
      ></indicator-legend>
      ${this.fundChart()}
      <indicator-legend
        name="资金趋势"
        .nameWidth=${153}
        .box=${201}
        .items=${[
          ["7.38亿", 123, BLACK, "up"],
          ["MA1:1.19亿", 208, ORANGE, "up"],
          ["MA2:6999万", 243, VIOLET, "up"],
        ]}
      ></indicator-legend>
      ${this.flowChart()}
      <indicator-legend
        name="MACD"
        .nameWidth=${117}
        .box=${162}
        .items=${[
          ["DIF:0.24", 163, BLACK, "up"],
          ["DEA:0.19", 175, ORANGE, "up"],
          ["M:0.09", 132, VIOLET, "up"],
        ]}
      ></indicator-legend>
      ${this.macdChart()} ${this.axis()}
      <div class="slider">
        <div class="track">
          <span class="knob"><i></i><i></i><i></i></span>
          <span class="knob"><i></i><i></i><i></i></span>
        </div>
      </div>
      <div class="promo"><div class="card"><i class="ball"></i></div></div>
      ${this.foot()}
      <svg class="ink-layer" width="1200" height="2670">
        <path d="M449.2 966V2278" stroke="#9c9c9c" stroke-width="1.6" />
        ${marks.map(
          (m) => svg`<path d=${smooth(m)} fill="none" stroke="#ff0000" stroke-width="12.5" stroke-linecap="round" stroke-linejoin="round" />`
        )}
      </svg>
    `;
  }
}
